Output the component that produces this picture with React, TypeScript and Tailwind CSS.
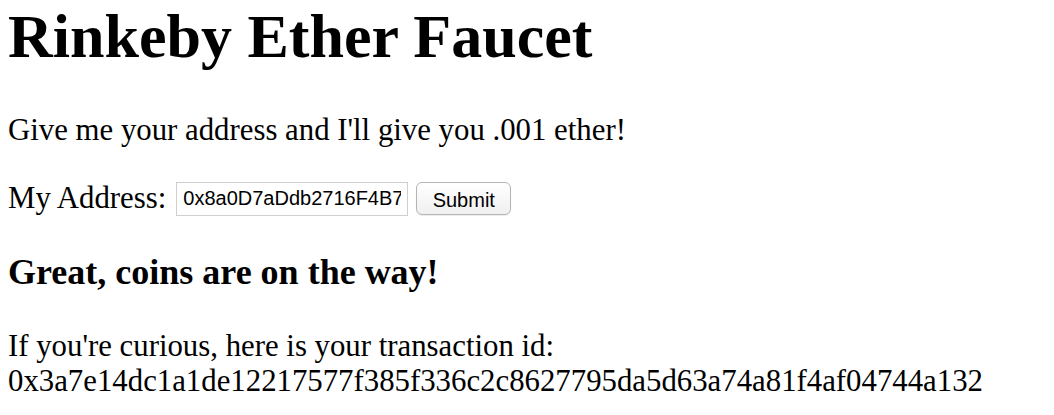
import React from 'react';

export default function App() {
    return (
        <div className="min-h-screen bg-white pl-2 pt-px text-black" style={{ fontFamily: '"Liberation Serif", "Times New Roman", serif' }}>
            <h1 className="text-[62px] leading-[70px] font-bold">Rinkeby Ether Faucet</h1>

            <p className="mt-[42px] text-[30.8px] leading-[35px]">Give me your address and I'll give you .001 ether!</p>

            {/* Address form */}
            <div className="mt-[33px] flex items-center text-[30.8px] leading-[35px]">
                <label>My Address:</label>
                <input
                    className="ml-[10px] w-[232px] h-[34px] border border-[#cfcfcf] px-[6px] text-[20px] text-black outline-none"
                    style={{ fontFamily: '"Liberation Sans", Arial, sans-serif' }}
                    defaultValue="0x8a0D7aDdb2716F4B7d2a4a3c5a3b5d1e6f8a9b0c"
                />
                <button
                    className="ml-[8px] w-[95px] h-[33px] rounded-[6px] border border-[#b5b5b5] bg-gradient-to-b from-white to-[#f0f0f0] text-[20px] text-black shadow-[0_1px_1px_rgba(0,0,0,0.08)]"
                    style={{ fontFamily: '"Liberation Sans", Arial, sans-serif' }}
                >
                    Submit
                </button>
            </div>

            <h3 className="mt-[36px] text-[36px] leading-[41px] font-bold">Great, coins are on the way!</h3>

            <p className="mt-[36px] text-[30.8px] leading-[35px]">
                If you're curious, here is your transaction id:
                <br />
                0x3a7e14dc1a1de12217577f385f336c2c8627795da5d63a74a81f4af04744a132
            </p>
        </div>
    );
}
